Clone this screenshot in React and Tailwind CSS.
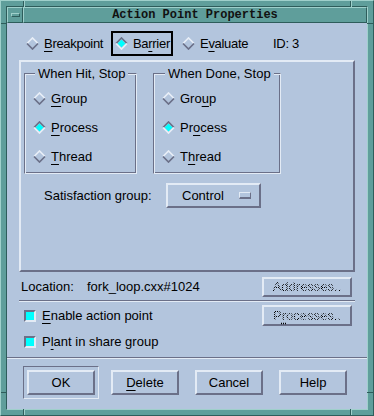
import React from 'react';

const raised = 'border-2 border-t-[#e3ebf5] border-l-[#e3ebf5] border-r-[#6b7088] border-b-[#6b7088]';
const stipple = 'bg-[image:repeating-conic-gradient(#000_0_25%,transparent_0_50%)] bg-[length:2px_2px] bg-clip-text text-transparent';

function Diamond({ on }) {
  return (
    <svg width="13" height="13" viewBox="0 0 13 13" className="shrink-0">
      {on && <polygon points="6.5,2.5 10.5,6.5 6.5,10.5 2.5,6.5" fill="#00ffff" />}
      <polyline points="1,6.5 6.5,1 12,6.5" fill="none" stroke={on ? '#6b7088' : '#e8eef7'} strokeWidth="1.7" />
      <polyline points="1,6.5 6.5,12 12,6.5" fill="none" stroke={on ? '#e8eef7' : '#6b7088'} strokeWidth="1.7" />
    </svg>
  );
}

// label with a Motif mnemonic underline
function Mn({ text, at }) {
  if (at < 0) return <span>{text}</span>;
  return (
    <span>
      {text.slice(0, at)}
      <span className="underline decoration-1 underline-offset-[3px]">{text[at]}</span>
      {text.slice(at + 1)}
    </span>
  );
}

function Check() {
  return (
    <div className="w-[12px] h-[12px] shrink-0 bg-[#00ffff] border-2 border-t-[#6b7088] border-l-[#6b7088] border-r-[#e3ebf5] border-b-[#e3ebf5]" />
  );
}

function Frame({ title, labelLeft, width, items }) {
  return (
    <div className={`relative h-[101px] border border-t-[#6b7088] border-l-[#6b7088] border-r-[#e3ebf5] border-b-[#e3ebf5] shadow-[inset_1px_1px_0_#e3ebf5,inset_-1px_-1px_0_#6b7088] pt-[10px] ${width}`}>
      <span className={`absolute -top-[8px] px-[3px] bg-[#b3c5dd] leading-[15px] ${labelLeft}`}>{title}</span>
      {items.map((it) => (
        <div key={it.text} className="flex items-center h-[29px] pl-[8px] gap-[5px]">
          <Diamond on={it.on} />
          <Mn text={it.text} at={it.at} />
        </div>
      ))}
    </div>
  );
}

function Button({ children }) {
  return (
    <div className={`w-[68px] h-[25px] flex items-center justify-center ${raised}`}>{children}</div>
  );
}

export default function App() {
  return (
    <div className="relative w-[374px] h-[416px] bg-[#5f9e9b] border border-t-[#9fd0cb] border-l-[#9fd0cb] border-r-[#2e5d5b] border-b-[#2e5d5b] p-[5px] flex flex-col font-['Liberation_Sans',Arial,sans-serif] text-[13px] text-black">
      {/* resize handle notches */}
      <div className="absolute left-[22px] top-0 w-[1px] h-[6px] bg-[#2e5d5b]" />
      <div className="absolute left-[23px] top-0 w-[1px] h-[6px] bg-[#9fd0cb]" />
      <div className="absolute right-[22px] top-0 w-[1px] h-[6px] bg-[#2e5d5b]" />
      <div className="absolute right-[21px] top-0 w-[1px] h-[6px] bg-[#9fd0cb]" />
      <div className="absolute left-[22px] bottom-0 w-[1px] h-[6px] bg-[#2e5d5b]" />
      <div className="absolute left-[23px] bottom-0 w-[1px] h-[6px] bg-[#9fd0cb]" />
      <div className="absolute right-[22px] bottom-0 w-[1px] h-[6px] bg-[#2e5d5b]" />
      <div className="absolute right-[21px] bottom-0 w-[1px] h-[6px] bg-[#9fd0cb]" />
      <div className="absolute left-0 top-[22px] w-[6px] h-[1px] bg-[#2e5d5b]" />
      <div className="absolute right-0 top-[22px] w-[6px] h-[1px] bg-[#2e5d5b]" />
      <div className="absolute left-0 bottom-[22px] w-[6px] h-[1px] bg-[#2e5d5b]" />
      <div className="absolute right-0 bottom-[22px] w-[6px] h-[1px] bg-[#2e5d5b]" />

      <div className="flex-1 flex flex-col border border-t-[#2e5d5b] border-l-[#2e5d5b] border-r-[#9fd0cb] border-b-[#9fd0cb]">
        {/* title bar */}
        <div className="flex h-[16px]">
          <div className="w-[16px] flex items-center justify-center border border-t-[#9fd0cb] border-l-[#9fd0cb] border-r-[#2e5d5b] border-b-[#2e5d5b]">
            <div className="w-[9px] h-[4px] border border-t-[#9fd0cb] border-l-[#9fd0cb] border-r-[#2e5d5b] border-b-[#2e5d5b]" />
          </div>
          <div className="flex-1 flex items-center justify-center border border-t-[#9fd0cb] border-l-[#9fd0cb] border-r-[#2e5d5b] border-b-[#2e5d5b] font-['Liberation_Mono',monospace] font-bold text-[12px] text-[#111]">
            Action Point Properties
          </div>
        </div>

        <div className="flex-1 bg-[#b3c5dd] flex flex-col">
          {/* type row */}
          <div className="flex items-center h-[25px] mt-[8px] pl-[15px] tracking-[-0.3px]">
            <div className="flex items-center h-[25px] w-[84px] border-2 border-transparent pl-[2px] gap-[5px]">
              <Diamond on={false} />
              <Mn text="Breakpoint" at={0} />
            </div>
            <div className="flex items-center h-[25px] w-[62px] ml-[5px] border-2 border-black pl-[2px] gap-[5px]">
              <Diamond on={true} />
              <Mn text="Barrier" at={2} />
            </div>
            <div className="flex items-center h-[25px] w-[75px] ml-[5px] border-2 border-transparent pl-[2px] gap-[5px]">
              <Diamond on={false} />
              <Mn text="Evaluate" at={1} />
            </div>
            <span className="ml-[20px]">ID: 3</span>
          </div>

          {/* main panel */}
          <div className={`mx-[12px] mt-[4px] h-[212px] ${raised}`}>
            <div className="flex pl-[3px] mt-[11px]">
              <Frame
                title="When Hit, Stop"
                labelLeft="left-[10px]"
                width="w-[113px]"
                items={[
                  { text: 'Group', at: 0, on: false },
                  { text: 'Process', at: 0, on: true },
                  { text: 'Thread', at: 0, on: false },
                ]}
              />
              <div className="ml-[16px]">
                <Frame
                  title="When Done, Stop"
                  labelLeft="left-[11px]"
                  width="w-[128px]"
                  items={[
                    { text: 'Group', at: 3, on: false },
                    { text: 'Process', at: 2, on: true },
                    { text: 'Thread', at: 1, on: false },
                  ]}
                />
              </div>
            </div>
            <div className="flex items-center mt-[9px] pl-[23px]">
              <span className="w-[122px]">Satisfaction group:</span>
              <div className={`w-[95px] h-[25px] flex items-center pl-[14px] ${raised}`}>
                <span>Control</span>
                <div className="ml-auto mr-[8px] w-[12px] h-[7px] border border-t-[#e3ebf5] border-l-[#e3ebf5] border-r-[#6b7088] border-b-[#6b7088] border-b-2" />
              </div>
            </div>
          </div>

          {/* location */}
          <div className="flex items-center h-[20px] mt-[5px] pl-[14px] pr-[15px]">
            <span className="w-[66px]">Location:</span>
            <span>fork_loop.cxx#1024</span>
            <div className={`ml-auto w-[90px] h-[20px] flex items-center justify-center ${raised}`}>
              <span className={stipple}>Addresses..</span>
            </div>
          </div>

          <div className="mx-[12px] mt-[3px] h-[2px] border-t border-t-[#6b7088] border-b border-b-[#e3ebf5]" />

          <div className="flex items-center h-[21px] mt-[3px] pl-[17px] pr-[15px]">
            <Check />
            <span className="ml-[6px]"><Mn text="Enable action point" at={0} /></span>
            <div className={`ml-auto w-[90px] h-[21px] flex items-center justify-center ${raised}`}>
              <span className={stipple}>
                P<span className="underline decoration-dotted decoration-black underline-offset-[3px]">r</span>ocesses..
              </span>
            </div>
          </div>

          <div className="flex items-center h-[21px] mt-[5px] pl-[17px]">
            <Check />
            <span className="ml-[6px]"><Mn text="Plant in share group" at={1} /></span>
          </div>

          <div className="mt-[5px] h-[2px] border-t border-t-[#6b7088] border-b border-b-[#e3ebf5]" />

          {/* buttons */}
          <div className="flex items-center mt-[7px] pl-[16px]">
            <div className="p-[3px] border border-t-[#6b7088] border-l-[#6b7088] border-r-[#e3ebf5] border-b-[#e3ebf5]">
              <Button>OK</Button>
            </div>
            <div className="ml-[12px]">
              <Button><Mn text="Delete" at={0} /></Button>
            </div>
            <div className="ml-[16px]">
              <Button>Cancel</Button>
            </div>
            <div className="ml-[16px]">
              <Button>Help</Button>
            </div>
          </div>
        </div>
      </div>
    </div>
  );
}
